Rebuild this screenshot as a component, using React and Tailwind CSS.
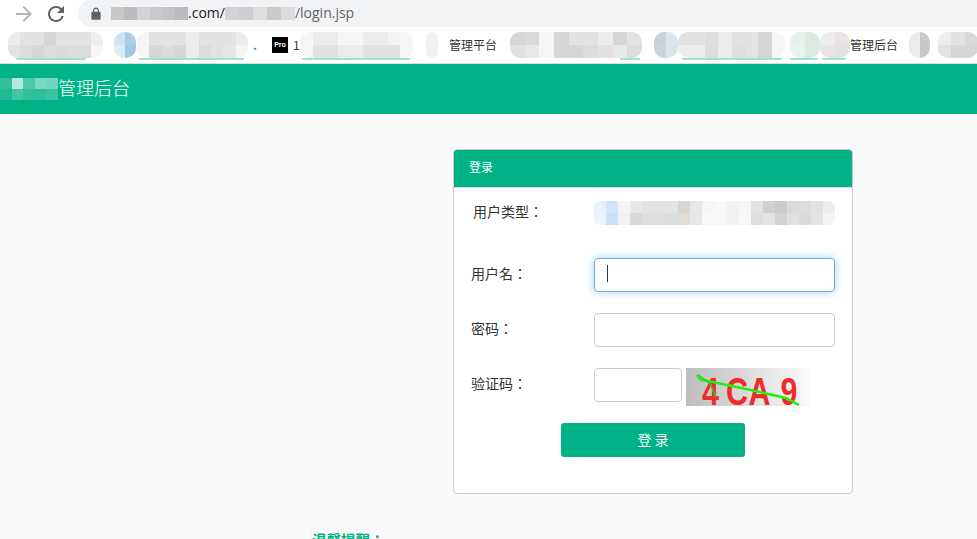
import React from "react";

const a = "#e2e2e3";
const b = "#d6d6d7";
const c = "#ececed";
const d = "#f5f5f6";
const e = "#dcdcdc";

// pixelated bits of the screenshot that were censored
const Mosaic = ({ rows, className }) => (
  <svg
    className={className}
    viewBox={`0 0 ${rows[0].length} ${rows.length}`}
    preserveAspectRatio="none"
    shapeRendering="crispEdges"
  >
    {rows.map((row, y) =>
      row.map((color, x) => (
        <rect key={`${x}-${y}`} x={x} y={y} width="1.02" height="1.02" fill={color} />
      ))
    )}
  </svg>
);

const Mark = ({ className }) => <div className={`h-[2px] bg-[#9fe0cf] rounded-full ${className}`} />;

const Blur = ({ rows, className, mark }) => (
  <div className={`relative h-[26px] shrink-0 ${className}`}>
    <Mosaic rows={rows} className="w-full h-full rounded-[10px]" />
    {mark && <Mark className={`absolute bottom-[-2px] ${mark}`} />}
  </div>
);

const Field = ({ label, children, labelClass = "" }) => (
  <div className="flex items-center">
    <label className={`w-[140px] shrink-0 pl-[17px] pb-[3px] text-[14px] text-[#333] font-['Noto_Sans_CJK_TC',sans-serif] ${labelClass}`}>
      {label}
    </label>
    {children}
  </div>
);

const inputClass = "h-[34px] bg-white border border-[#ccc] rounded-[4px] outline-none";

export default function App() {
  return (
    <div className="h-screen overflow-hidden bg-[#fafafa] font-['Noto_Sans_CJK_SC','Liberation_Sans',sans-serif]">
      {/* browser chrome */}
      <div className="h-[27px] bg-white flex items-center">
        <svg className="ml-[12px] w-[24px] h-[24px]" viewBox="0 0 24 24" fill="#b4b6b8">
          <path d="M12 4l-1.41 1.41L16.17 11H4v2h12.17l-5.58 5.59L12 20l8-8z" />
        </svg>
        <svg className="ml-[8px] w-[24px] h-[24px]" viewBox="0 0 24 24" fill="#5f6368">
          <path d="M17.65 6.35A7.958 7.958 0 0 0 12 4c-4.42 0-7.99 3.58-7.99 8s3.57 8 7.99 8c3.73 0 6.84-2.55 7.73-6h-2.08A5.99 5.99 0 0 1 12 18c-3.31 0-6-2.69-6-6s2.69-6 6-6c1.66 0 3.14.69 4.22 1.78L13 11h7V4l-2.35 2.35z" />
        </svg>
        <div className="ml-[10px] flex-1 h-[27px] bg-[#f1f3f4] rounded-l-[14px] flex items-center pl-[11px]">
          <svg className="w-[14px] h-[14px]" viewBox="0 0 24 24" fill="#5f6368">
            <path d="M18 8h-1V6c0-2.76-2.24-5-5-5S7 3.24 7 6v2H6c-1.1 0-2 .9-2 2v10c0 1.1.9 2 2 2h12c1.1 0 2-.9 2-2V10c0-1.1-.9-2-2-2zM9 6c0-1.66 1.34-3 3-3s3 1.34 3 3v2H9V6z" />
          </svg>
          <Mosaic
            className="ml-[8px] w-[77px] h-[13px]"
            rows={[["#c8c8ca", "#bcbbbe", "#d2d3d6", "#c9c8ca", "#c4c4c6", "#b9bbbe"]]}
          />
          <span className="pb-[2px] text-[14px] text-[#202124] font-['Open_Sans',sans-serif]">.com/</span>
          <Mosaic
            className="w-[70px] h-[13px]"
            rows={[["#d4d4d6", "#ccced1", "#dededc", "#c8cacc", "#dcdcde"]]}
          />
          <span className="pb-[2px] text-[14px] text-[#5f6368] font-['Open_Sans',sans-serif]">/login.jsp</span>
        </div>
      </div>
      <div className="h-[37px] bg-white border-b border-[#dcdfe1] flex items-center overflow-hidden">
        <Blur
          className="ml-[8px] w-[95px]"
          mark="left-[8px] w-[70px]"
          rows={[[c, a, a, b, a, a, a, "#eeeeee"], [a, e, b, e, "#dadada", e, e, d]]}
        />
        <Blur
          className="ml-[11px] w-[22px]"
          rows={[["#cfe4f2", "#a9cfe8"], ["#dcecf5", "#a0c8e6"]]}
        />
        <Blur
          className="ml-[1px] w-[111px]"
          mark="left-[2px] w-[105px]"
          rows={[[d, a, a, "#e4e2e0", c, a, a, a, c], [d, b, e, b, c, e, a, "#e6e6e6", d]]}
        />
        <span className="ml-[5px] w-[13px] shrink-0 text-[12px] font-bold leading-none text-[#2f7fd0]">.</span>
        <div className="ml-[6px] w-[16px] h-[16px] shrink-0 bg-black flex items-center justify-center text-[7px] font-bold text-white font-['Liberation_Sans',sans-serif]">
          Pro
        </div>
        <span className="ml-[5px] w-[7px] shrink-0 text-[12px] text-[#333]">1</span>
        <Blur
          className="w-[113px]"
          mark="left-[2px] w-[108px]"
          rows={[[d, c, c, d, d, c, c, "#f2f3f5", d], [d, a, a, "#ebebeb", c, a, a, a, d]]}
        />
        <Blur className="ml-[13px] w-[12px]" rows={[["#f1f1ee"], ["#f0f0ec"]]} />
        <span className="ml-[11px] text-[12px] text-[#333] shrink-0">管理平台</span>
        <Blur
          className="ml-[13px] w-[132px]"
          mark="right-[2px] w-[20px]"
          rows={[[b, "#d9d9dc", d, b, a, a, c, b, a], [a, "#e8e8ea", d, b, b, e, a, "#e8e8e4", e]]}
        />
        <Blur
          className="ml-[12px] w-[24px]"
          rows={[["#c8d0da", "#dbe5ec"], ["#c8d4dc", "#dbe5ec"]]}
        />
        <Blur
          className="w-[107px]"
          mark="left-[4px] w-[100px]"
          rows={[[a, a, "#dededc", c, "#e0e0de", a, b, d], [c, c, e, c, "#dededa", a, b, d]]}
        />
        <Blur
          className="ml-[5px] w-[30px]"
          mark="left-0 w-[28px]"
          rows={[["#e6f1ea", "#dcebe2"], ["#e8f3ec", "#dcebe2"]]}
        />
        <Blur
          className="w-[30px]"
          mark="left-[2px] w-[24px]"
          rows={[["#ededed", "#e8e4e4"], ["#e6e4e4", a]]}
        />
        <span className="text-[12px] text-[#333] shrink-0">管理后台</span>
        <Blur className="ml-[11px] w-[21px]" rows={[[c, "#c8c8ca"], [c, "#c8c8ca"]]} />
        <Blur className="ml-[8px] w-[40px]" rows={[[c, a, "#d8d8da"], [a, b, b]]} />
      </div>

      {/* site header */}
      <header className="h-[50px] bg-[#00b386] flex items-center">
        <Mosaic
          className="w-[58px] h-[22px]"
          rows={[
            ["#2fc09b", "#b5e8da", "#4cc8a8", "#7ad8c0", "#70d5bb"],
            ["#1fbb92", "#40c5a3", "#30c09c", "#2fbf9a", "#3cc3a1"],
          ]}
        />
        <span className="pb-[3px] text-[18px] font-light text-white">管理后台</span>
      </header>

      {/* login panel */}
      <div className="mt-[35px] ml-[453px] w-[400px] h-[345px] bg-white border border-[#ccc] rounded-[4px] overflow-hidden">
        <div className="h-[38px] bg-[#00b386] border-b border-[#ddd] flex items-center pl-[15px] pb-[3px] text-[12px] text-white">
          登录
        </div>
        <div className="pt-[13px]">
          <Field label="用户类型：" labelClass="pl-[19px]">
            <Mosaic
              className="w-[241px] h-[24px] rounded-[6px]"
              rows={[
                ["#e8f1fd", "#d2e4fd", "#f5f5f5", "#e8e8ea", "#e4e2e2", "#e2e2e2", "#e4e4e6", "#d8d6d2", "#e6e7e9", "#f6f6f6", "#f8f8f8", "#f2f2f2", "#f6f6f6", "#e2e2e3", "#d0d0d0", "#cbcbc9", "#dadada", "#dcdcdc", "#e2e2e4", "#eeeef0"],
                ["#ecf3fd", "#c8defd", "#f2f2f2", "#d8d8d8", "#e0dedc", "#dddddd", "#d9dde0", "#e0dcd6", "#e6e7e9", "#f8f8f8", "#f7f7f7", "#f1f1f1", "#f8f8f8", "#e0dedc", "#e0e4e4", "#d4d2d0", "#e0e0e0", "#d9dadc", "#e4e4e4", "#f3f4f4"],
              ]}
            />
          </Field>
          <div className="mt-[33px]">
            <Field label="用户名：">
              <div className="relative">
                <input
                  readOnly
                  className="block w-[241px] h-[34px] bg-white border border-[#66afe9] rounded-[4px] outline-none shadow-[0_0_8px_rgba(102,175,233,0.6)]"
                />
                <span className="absolute left-[13px] top-[7px] w-px h-[17px] bg-[#333]" />
              </div>
            </Field>
          </div>
          <div className="mt-[21px]">
            <Field label="密码：">
              <input readOnly className={`${inputClass} block w-[241px]`} />
            </Field>
          </div>
          <div className="mt-[21px] flex items-start">
            <label className="w-[140px] shrink-0 pl-[17px] text-[14px] leading-[30px] text-[#333] font-['Noto_Sans_CJK_TC',sans-serif]">
              验证码：
            </label>
            <input readOnly className={`${inputClass} block w-[88px]`} />
            <svg className="ml-[4px] w-[125px] h-[38px]" viewBox="0 0 125 38">
              <defs>
                <linearGradient id="captcha" x1="0" x2="1" y1="0" y2="0">
                  <stop offset="0" stopColor="#bdbdbd" />
                  <stop offset="1" stopColor="#fbfbfb" />
                </linearGradient>
              </defs>
              <rect width="125" height="38" fill="url(#captcha)" />
              <text
                x="20 50 78 118"
                y="37"
                transform="scale(0.8 1)"
                fontFamily="Liberation Sans, sans-serif"
                fontWeight="bold"
                fontSize="38"
                fill="#ee2a2a"
              >
                4CA9
              </text>
              <path d="M11 7 L15 12 L22 13 L60 21 L100 30 L113 37" fill="none" stroke="#22f00f" strokeWidth="2.5" />
              <path d="M12 7 L24 15 L30 30" fill="none" stroke="#22d020" strokeWidth="1.5" />
            </svg>
          </div>
          <button className="block mt-[17px] ml-[107px] w-[184px] h-[34px] pb-[2px] bg-[#00b386] rounded-[3px] text-[14px] text-white">
            登 录
          </button>
        </div>
      </div>

      {/* notice, runs off the bottom of the window */}
      <p className="mt-[36px] ml-[312px] text-[14.5px] leading-[20px] font-bold text-[#00b386] font-['Noto_Sans_CJK_TC',sans-serif]">
        温馨提醒：
      </p>
    </div>
  );
}
